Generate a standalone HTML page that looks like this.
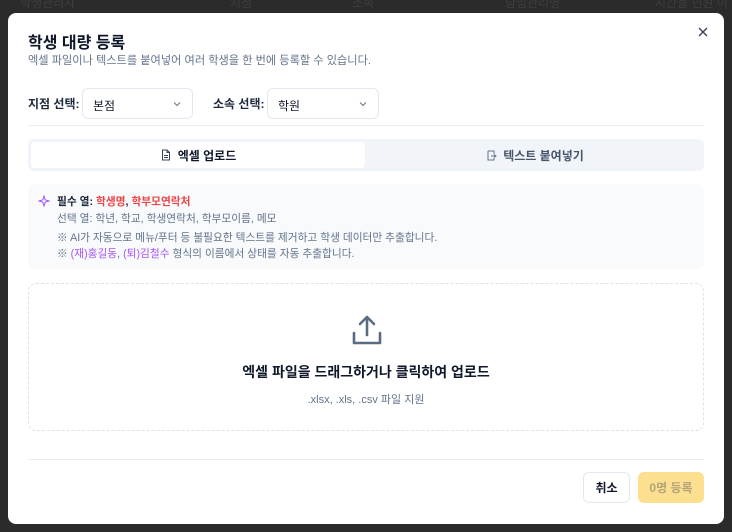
<!DOCTYPE html>
<html><head><meta charset="utf-8"><style>
*{box-sizing:border-box;margin:0;padding:0}
body{width:732px;height:532px;background:#2b2b2b;font-family:"Liberation Sans","Noto Sans CJK KR",sans-serif;position:relative;overflow:hidden;color:#0f172a}
.bgt{position:absolute;top:-6px;font-size:12px;color:#3e3e3e}
.modal{position:absolute;left:8px;top:13px;width:716px;height:511px;background:#fff;border-radius:8px}
.a{position:absolute}
.title{left:20px;top:16px;font-size:16px;font-weight:bold}
.sub{left:20px;top:39px;font-size:11.2px;color:#64748b}
.lab{font-size:12px;font-weight:bold;color:#1e293b}
.sel{border:1px solid #e2e8f0;border-radius:6px;height:31px;font-size:12px;padding:8px 10px;color:#0f172a}
.chev{position:absolute;right:10px;top:10px}
.hr{left:20px;width:676px;height:1px;background:#e8edf3}
.tabs{left:20px;top:126px;width:676px;height:32px;background:#f1f5f9;border-radius:6px}
.tab{position:absolute;top:3px;height:26px;font-size:12px;font-weight:bold;display:flex;align-items:center;justify-content:center;gap:6px}
.info{left:20px;top:171px;width:676px;height:85px;background:#f8fafc;border-radius:8px;font-size:10.7px;color:#64748b}
.drop{left:20px;top:270px;width:676px;height:148px;border:1px dashed #dbe2ea;border-radius:8px}
.btn{border-radius:6px;font-size:12px;font-weight:bold;display:flex;align-items:center;justify-content:center}
</style></head><body>
<div class="bgt" style="left:20px">학생관리자</div>
<div class="bgt" style="left:230px">지점</div>
<div class="bgt" style="left:352px">소속</div>
<div class="bgt" style="left:505px">담임관리명</div>
<div class="bgt" style="left:655px">시간을 인원 이</div>
<div class="modal">
<div class="a title">학생 대량 등록</div>
<div class="a sub">엑셀 파일이나 텍스트를 붙여넣어 여러 학생을 한 번에 등록할 수 있습니다.</div>
<svg class="a" style="left:690px;top:14px" width="10" height="10" viewBox="0 0 10 10"><path d="M1 1L9 9M9 1L1 9" stroke="#334155" stroke-width="1.3"/></svg>
<div class="a lab" style="left:20px;top:82px">지점 선택:</div>
<div class="a sel" style="left:74px;top:75px;width:111px">본점<svg class="chev" width="10" height="10" viewBox="0 0 10 10"><path d="M2 3.5L5 6.5L8 3.5" stroke="#64748b" fill="none"/></svg></div>
<div class="a lab" style="left:205px;top:82px">소속 선택:</div>
<div class="a sel" style="left:259px;top:75px;width:112px">학원<svg class="chev" width="10" height="10" viewBox="0 0 10 10"><path d="M2 3.5L5 6.5L8 3.5" stroke="#64748b" fill="none"/></svg></div>
<div class="a hr" style="top:112px"></div>
<div class="a tabs">
<div class="tab" style="left:3px;width:334px;background:#fff;border-radius:4px;color:#0f172a"><svg width="12" height="12" viewBox="0 0 12 12"><path d="M2.5 1h4.5l2.5 2.5V11h-7z M7 1v2.5h2.5 M4 6.5h4M4 8.5h4" stroke="#334155" fill="none"/></svg>엑셀 업로드</div>
<div class="tab" style="left:340px;width:333px;color:#475569"><svg width="12" height="12" viewBox="0 0 12 12"><path d="M3 2h6v3 M9 9v2H3V2 M6 7h5M9 5.5L11 7 9 8.5" stroke="#64748b" fill="none"/></svg>텍스트 붙여넣기</div>
</div>
<div class="a info">
<svg class="a" style="left:10px;top:11px" width="12" height="12" viewBox="0 0 12 12"><path d="M6 1L7.2 4.8 11 6 7.2 7.2 6 11 4.8 7.2 1 6 4.8 4.8z" stroke="#a855f7" fill="none"/></svg>
<div class="a" style="left:29px;top:10px;font-weight:bold;color:#1e293b">필수 열: <span style="color:#ef4444">학생명</span>, <span style="color:#ef4444">학부모연락처</span></div>
<div class="a" style="left:29px;top:27px">선택 열: 학년, 학교, 학생연락처, 학부모이름, 메모</div>
<div class="a" style="left:29px;top:46px">※ AI가 자동으로 메뉴/푸터 등 불필요한 텍스트를 제거하고 학생 데이터만 추출합니다.</div>
<div class="a" style="left:29px;top:62px">※ <span style="color:#a855f7">(재)홍길동</span>, <span style="color:#a855f7">(퇴)김철수</span> 형식의 이름에서 상태를 자동 추출합니다.</div>
</div>
<div class="a drop">
<svg class="a" style="left:321px;top:29px" width="34" height="34" viewBox="0 0 34 34"><path d="M17 22V4M10 11L17 4 24 11M4 20v10h26V20" stroke="#5b6b82" stroke-width="2.6" fill="none" stroke-linecap="round" stroke-linejoin="round"/></svg>
<div class="a" style="left:0;width:674px;top:78px;text-align:center;font-size:14px;font-weight:bold;color:#0f172a">엑셀 파일을 드래그하거나 클릭하여 업로드</div>
<div class="a" style="left:0;width:674px;top:107px;text-align:center;font-size:11px;color:#64748b">.xlsx, .xls, .csv 파일 지원</div>
</div>
<div class="a hr" style="top:446px"></div>
<div class="a btn" style="left:575px;top:459px;width:47px;height:31px;border:1px solid #e2e8f0;color:#0f172a">취소</div>
<div class="a btn" style="left:630px;top:459px;width:66px;height:31px;background:#fde08f;color:#b5a47a">0명 등록</div>
</div>
</body></html>
